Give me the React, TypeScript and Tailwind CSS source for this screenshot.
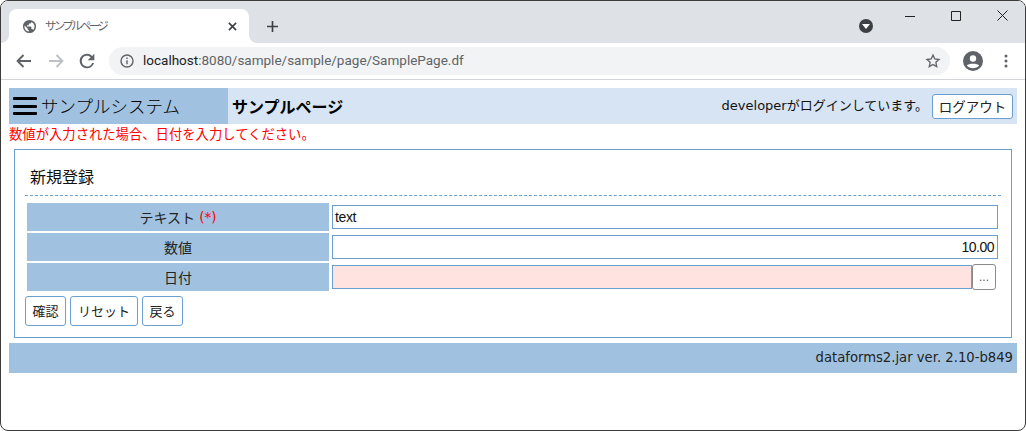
import React from "react";

const ui = { fontFamily: '"DejaVu Sans", "Noto Sans CJK JP", sans-serif' };
const arial = { fontFamily: '"Liberation Sans", "Noto Sans CJK JP", sans-serif' };
const cjk = { fontFamily: '"Noto Sans CJK JP", sans-serif' };

function Row({ label, children }: { label: React.ReactNode; children: React.ReactNode }) {
  return (
    <div className="flex h-[28px] gap-[3px]">
      <div className="flex w-[302px] shrink-0 items-center justify-center bg-[#a0c2e0] text-[14px] text-[#222]" style={cjk}>
        {label}
      </div>
      <div className="flex min-w-0 flex-1 items-center">{children}</div>
    </div>
  );
}

function Btn({ children, w }: { children: React.ReactNode; w: string }) {
  return (
    <button className={`flex h-[30px] items-center justify-center rounded-[3px] border border-[#6a9fcf] bg-white text-[13px] text-[#222] ${w}`} style={cjk}>
      {children}
    </button>
  );
}

export default function App() {
  return (
    <div className="flex h-[431px] w-[1026px] flex-col overflow-hidden rounded-[8px] border border-[#3c3c3c] bg-white">
      {/* tab strip */}
      <div className="flex h-[42px] shrink-0 items-end bg-[#dee1e6] pl-[8px]">
        <div className="relative flex h-[34px] w-[240px] items-center rounded-t-[8px] bg-white pl-[13px] pr-[10px]">
          <svg width="8" height="8" viewBox="0 0 8 8" fill="#fff" className="absolute bottom-0 left-[-8px]"><path d="M8 0v8H0a8 8 0 0 0 8-8z" /></svg>
          <svg width="8" height="8" viewBox="0 0 8 8" fill="#fff" className="absolute bottom-0 right-[-8px]"><path d="M0 0v8h8a8 8 0 0 1-8-8z" /></svg>
          <svg width="15" height="15" viewBox="0 0 24 24" className="shrink-0" fill="#5f6368">
            <path d="M12 1.500a10.500 10.500 0 1 0 0 21 10.500 10.500 0 0 0 0-21zM4 12c0-.6.07-1.200.2-1.800L9 15v1a2 2 0 0 0 2 2v2a8 8 0 0 1-7-8zm13.900 5.400A2 2 0 0 0 16 16h-1v-3a1 1 0 0 0-1-1H8v-2h2a1 1 0 0 0 1-1V7h2a2 2 0 0 0 2-2v-.4a8 8 0 0 1 2.900 12.800z" />
          </svg>
          <span className="ml-[8px] flex-1 text-[11.500px] tracking-[-2.700px] text-[#5f6368]" style={cjk}>サンプルページ</span>
          <svg width="9" height="9" viewBox="0 0 10 10" stroke="#3c4043" strokeWidth="1.800" className="mr-[2px]">
            <path d="M1 1l8 8M9 1l-8 8" />
          </svg>
        </div>
        <svg width="11" height="11" viewBox="0 0 12 12" stroke="#3c4043" strokeWidth="1.800" className="mb-[11px] ml-[18px]">
          <path d="M6 0v12M0 6h12" />
        </svg>
        <div className="flex-1" />
        <div className="relative mb-[10px] mr-[152px] h-[14px] w-[14px] rounded-full bg-[#3c4043]">
          <svg width="8" height="6" viewBox="0 0 8 6" fill="#fff" className="absolute left-[3px] top-[5px]">
            <path d="M0 0h8L4 5z" />
          </svg>
        </div>
      </div>
      {/* window controls */}
      <div className="absolute left-[905px] top-[10px] flex items-center">
        <svg width="10" height="10" viewBox="0 0 10 10" stroke="#222"><path d="M0 5.500h10" /></svg>
        <svg width="10" height="10" viewBox="0 0 10 10" stroke="#222" fill="none" className="ml-[36px]"><path d="M.5.5h9v9h-9z" /></svg>
        <svg width="11" height="11" viewBox="0 0 11 11" stroke="#222" className="ml-[36px]"><path d="M.5.5l10 10M10.500.5l-10 10" /></svg>
      </div>
      {/* toolbar */}
      <div className="flex h-[37px] shrink-0 items-center border-b border-[#d3d5d8] bg-white pl-[15px]">
        <svg width="16" height="14" viewBox="0 0 16 14" fill="none" stroke="#5f6368" strokeWidth="1.900"><path d="M15 7H2M7.500 1 1.600 7l5.900 6" /></svg>
        <svg width="16" height="14" viewBox="0 0 16 14" fill="none" stroke="#bdc1c6" strokeWidth="1.900" className="ml-[16px]"><path d="M1 7h13M8.500 1l5.900 6-5.900 6" /></svg>
        <svg width="16" height="16" viewBox="0 0 24 24" fill="#5f6368" className="ml-[15px]">
          <path d="M19.600 4.400A11 11 0 0 0 12 1a11 11 0 1 0 10.600 14h-2.900A8 8 0 1 1 12 4c2.200 0 4.200.9 5.600 2.400L13 11h10V1z" />
        </svg>
        <div className="ml-[14px] flex h-[28px] w-[841px] items-center rounded-full bg-[#f1f3f4] pl-[11px]">
          <svg width="14" height="14" viewBox="0 0 14 14" fill="none" stroke="#5f6368" strokeWidth="1.400">
            <circle cx="7" cy="7" r="6" />
            <path d="M7 6.200v4M7 3.600v1.500" />
          </svg>
          <div className="ml-[9px] flex-1 text-[13.500px] leading-none text-[#5f6368]" style={{ fontFamily: '"Roboto", sans-serif' }}>
            <span className="text-[#202124]">localhost</span>:8080/sample/sample/page/SamplePage.df
          </div>
          <svg width="16" height="16" viewBox="0 0 24 24" fill="none" stroke="#5f6368" strokeWidth="2" className="mr-[9px]">
            <path d="M12 3l2.700 6 6.300.7-4.700 4.300 1.300 6.500L12 17.200 6.400 20.500l1.300-6.500L3 9.700 9.300 9z" />
          </svg>
        </div>
        <svg width="20" height="20" viewBox="0 0 20 20" className="ml-[13px]">
          <circle cx="10" cy="10" r="10" fill="#5f6368" />
          <circle cx="10" cy="7.500" r="3.200" fill="#fff" />
          <path d="M3.800 14.500C5.500 12 14.500 12 16.200 14.500 13 18 7 18 3.800 14.500z" fill="#fff" />
        </svg>
        <svg width="4" height="14" viewBox="0 0 4 14" fill="#5f6368" className="ml-[21px]">
          <circle cx="2" cy="2" r="1.500" /><circle cx="2" cy="7" r="1.500" /><circle cx="2" cy="12" r="1.500" />
        </svg>
      </div>
      {/* page */}
      <div className="flex flex-1 flex-col pl-[8px] pr-[8px] pt-[8px]" style={ui}>
        <div className="flex h-[36px] shrink-0 items-center bg-[#d6e4f3]">
          <div className="flex h-full w-[219px] shrink-0 items-center bg-[#a0c2e0] pl-[4px]">
            <div className="flex h-[18px] w-[24px] flex-col justify-between">
              <div className="h-[3px] rounded-[1px] bg-black" />
              <div className="h-[3px] rounded-[1px] bg-black" />
              <div className="h-[3px] rounded-[1px] bg-black" />
            </div>
            <span className="ml-[4px] text-[17.500px] font-light leading-none text-black" style={cjk}>サンプルシステム</span>
          </div>
          <span className="ml-[4px] text-[16px] font-bold text-black" style={cjk}>サンプルページ</span>
          <div className="flex-1" />
          <span className="text-[13px] text-[#111]" style={ui}>developerがログインしています。</span>
          <button className="ml-[4px] mr-[4px] flex h-[25px] w-[81px] items-center justify-center rounded-[3px] border border-[#6a9fcf] bg-white text-[13.500px] text-[#222]" style={cjk}>
            ログアウト
          </button>
        </div>
        <div className="h-[25px] shrink-0 text-[13.330px] leading-[20px] text-[#f00]" style={cjk}>数値が入力された場合、日付を入力してください。</div>
        <div className="mx-[5px] flex h-[189px] shrink-0 flex-col border border-[#6a9fcf] px-[10px]">
          <div className="flex h-[46px] shrink-0 items-center border-b border-dashed border-[#6a9fcf] pl-[5px] pt-[6px] text-[16px] text-[#111]" style={cjk}>
            新規登録
          </div>
          <div className="flex flex-col gap-[2px] pl-[2px] pr-[3px] pt-[7px]">
            <Row label={<>テキスト <span className="text-[13.500px] text-[#f00]" style={ui}>&nbsp;(*)</span></>}>
              <div className="flex h-[24px] flex-1 items-center border border-[#6a9fcf] bg-white pl-[2px] text-[14px] tracking-[-0.4px] text-[#111]" style={arial}>text</div>
            </Row>
            <Row label="数値">
              <div className="flex h-[24px] flex-1 items-center justify-end border border-[#6a9fcf] bg-white pr-[3px] text-[14px] tracking-[-0.5px] text-[#111]" style={arial}>10.00</div>
            </Row>
            <Row label="日付">
              <div className="h-[24px] flex-1 border border-[#6a9fcf] bg-[#ffe3e0]" />
              <button className="flex h-[26px] w-[24px] shrink-0 items-center justify-center rounded-[3px] border border-[#8a8a8a] bg-white text-[12px] text-[#555]" style={arial}>...</button>
              <div className="w-[2px] shrink-0" />
            </Row>
          </div>
          <div className="mt-[5px] flex gap-[4px]">
            <Btn w="w-[41px]">確認</Btn>
            <Btn w="w-[68px]">リセット</Btn>
            <Btn w="w-[41px]">戻る</Btn>
          </div>
        </div>
        <div className="mt-[5px] flex h-[30px] shrink-0 items-center justify-end bg-[#a0c2e0] pr-[4px] text-[13.200px] text-[#222]" style={ui}>
          dataforms2.jar ver. 2.10-b849
        </div>
      </div>
    </div>
  );
}
